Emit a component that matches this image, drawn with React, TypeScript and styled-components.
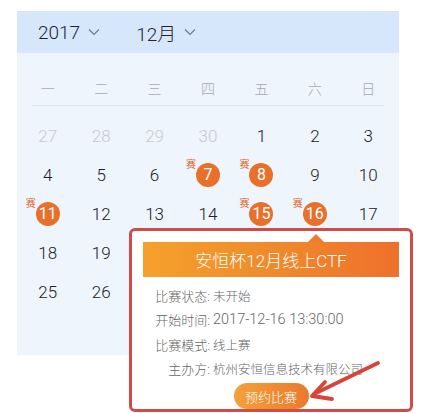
import React from "react";
import styled, { createGlobalStyle } from "styled-components";

const GlobalStyle = createGlobalStyle`
  html, body {
    margin: 0;
    padding: 0;
    background: #ffffff;
  }
  body {
    font-family: "Roboto", "Noto Sans CJK SC", sans-serif;
    font-weight: 300;
    color: #333;
  }
`;

const Page = styled.div`
  position: relative;
  width: 427px;
  height: 413px;
  box-sizing: border-box;
  padding: 11px 0 0 17px;
  overflow: hidden;
`;

const Calendar = styled.div`
  width: 382px;
  height: 344px;
  background: #eef5fd;
`;

const Header = styled.div`
  height: 42px;
  display: flex;
  align-items: center;
  gap: 36px;
  padding-left: 21px;
  background: #d6e7fb;
`;

const Picker = styled.div`
  display: flex;
  align-items: center;
  gap: 8px;
  font-size: 19px;
  font-weight: 300;
  color: #1f2530;
`;

const CalBody = styled.div`
  padding: 17px 4px 0;
`;

const WeekRow = styled.div`
  display: grid;
  grid-template-columns: repeat(7, 1fr);
  height: 35px;
  align-items: center;
  justify-items: center;
  font-size: 14px;
  color: #a6aab0;
`;

const Divider = styled.div`
  height: 1px;
  margin: 0 11px;
  background: #dbe3ec;
`;

const DateGrid = styled.div`
  display: grid;
  grid-template-columns: repeat(7, 1fr);
  grid-auto-rows: 39px;
  padding-top: 10px;
`;

const Cell = styled.div`
  display: flex;
  align-items: center;
  justify-content: center;
`;

const DayNum = styled.span<{ $muted?: boolean }>`
  font-size: 17px;
  font-weight: 300;
  color: ${(p) => (p.$muted ? "#c6cad0" : "#222")};
`;

const EventDay = styled.span`
  position: relative;
  width: 24px;
  height: 24px;
  border-radius: 50%;
  background: #e8702b;
  color: #fff;
  font-size: 16px;
  font-weight: 400;
  display: flex;
  align-items: center;
  justify-content: center;
`;

const EventTag = styled.span`
  position: absolute;
  left: -10px;
  top: -3px;
  font-size: 10px;
  line-height: 10px;
  color: #e0672b;
`;

const Popup = styled.div`
  position: absolute;
  left: 129px;
  top: 228px;
  width: 284px;
  height: 184px;
  box-sizing: border-box;
  border: 3px solid #d14b48;
  border-radius: 6px;
  background: #fff;
  padding: 11px 11px 0;
`;

const Card = styled.div`
  position: relative;
`;

const TitleBar = styled.div`
  height: 35px;
  display: flex;
  align-items: center;
  justify-content: center;
  background: linear-gradient(90deg, #f5a12c 0%, #f08a2c 50%, #ee702b 100%);
  color: #fff;
  font-size: 17px;
`;

const Notch = styled.span`
  position: absolute;
  top: -8px;
  left: 165px;
  width: 0;
  height: 0;
  border-left: 8px solid transparent;
  border-right: 8px solid transparent;
  border-bottom: 8px solid #ef7b2c;
`;

const InfoList = styled.div`
  padding: 6px 0 0 9px;
`;

const InfoRow = styled.div`
  display: flex;
  height: 24.5px;
  align-items: center;
  font-size: 13px;
  color: #666;
`;

const Label = styled.span`
  width: 58px;
  margin-right: 3px;
  text-align: right;
  white-space: nowrap;
`;

const Value = styled.span<{ $numeric?: boolean }>`
  white-space: nowrap;
  font-size: ${(p) => (p.$numeric ? "14.5px" : "12.5px")};
`;

const BookButton = styled.button`
  display: block;
  margin: 2px auto 0;
  width: 75px;
  height: 26px;
  border: none;
  border-radius: 13px;
  background: linear-gradient(90deg, #f3a13a 0%, #ea7a2d 100%);
  color: #fff;
  font-family: inherit;
  font-weight: 300;
  font-size: 13px;
  padding: 0;
`;

const Mark = styled.svg`
  position: absolute;
  left: 0;
  top: 0;
  pointer-events: none;
`;

const Chevron = () => (
  <svg width="12" height="8" viewBox="0 0 12 8">
    <path d="M1 1.5 L6 6.5 L11 1.5" fill="none" stroke="#6f7785" strokeWidth="1.1" />
  </svg>
);

const weekdays = ["一", "二", "三", "四", "五", "六", "日"];

type Day = { n: number; muted?: boolean };

const days: Day[] = [
  { n: 27, muted: true },
  { n: 28, muted: true },
  { n: 29, muted: true },
  { n: 30, muted: true },
  ...Array.from({ length: 31 }, (_, i) => ({ n: i + 1 })),
];

const events = [7, 8, 11, 15, 16];

const info = [
  { label: "比赛状态:", value: "未开始" },
  { label: "开始时间:", value: "2017-12-16 13:30:00", numeric: true },
  { label: "比赛模式:", value: "线上赛" },
  { label: "主办方:", value: "杭州安恒信息技术有限公司" },
];

export default function App() {
  return (
    <>
      <GlobalStyle />
      <Page>
        <Calendar>
          <Header>
            <Picker>
              2017 <Chevron />
            </Picker>
            <Picker>
              12月 <Chevron />
            </Picker>
          </Header>
          <CalBody>
            <WeekRow>
              {weekdays.map((w) => (
                <span key={w}>{w}</span>
              ))}
            </WeekRow>
            <Divider />
            <DateGrid>
              {days.map((d, i) => (
                <Cell key={i}>
                  {!d.muted && events.includes(d.n) ? (
                    <EventDay>
                      <EventTag>赛</EventTag>
                      {d.n}
                    </EventDay>
                  ) : (
                    <DayNum $muted={d.muted}>{d.n}</DayNum>
                  )}
                </Cell>
              ))}
            </DateGrid>
          </CalBody>
        </Calendar>

        <Popup>
          <Card>
            <Notch />
            <TitleBar>安恒杯12月线上CTF</TitleBar>
            <InfoList>
              {info.map((r) => (
                <InfoRow key={r.label}>
                  <Label>{r.label}</Label>
                  <Value $numeric={r.numeric}>{r.value}</Value>
                </InfoRow>
              ))}
            </InfoList>
            <BookButton>预约比赛</BookButton>
          </Card>
        </Popup>

        <Mark width="427" height="413" viewBox="0 0 427 413">
          <g fill="none" stroke="#d9443a" strokeWidth="3.8" strokeLinecap="round" strokeLinejoin="round">
            <line x1="378" y1="363" x2="314" y2="394" />
            <polyline points="325,382 312,396 332,399" />
          </g>
        </Mark>
      </Page>
    </>
  );
}
